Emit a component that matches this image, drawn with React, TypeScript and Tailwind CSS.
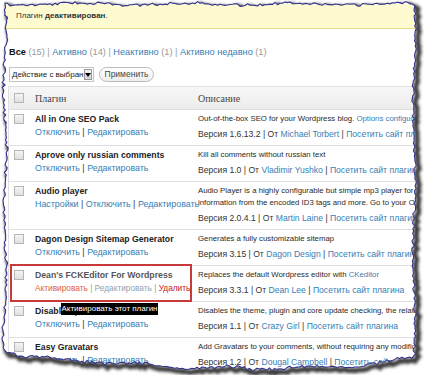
import React from "react";

type Plugin = {
  name: string;
  links: string[];
  desc: string[];
  descLink?: string;
  version: string;
  author: string;
  inactive?: boolean;
};

const plugins: Plugin[] = [
  {
    name: "All in One SEO Pack",
    links: ["Отключить", "Редактировать"],
    desc: ["Out-of-the-box SEO for your Wordpress blog. "],
    descLink: "Options configuration panel",
    version: "1.6.13.2",
    author: "Michael Torbert",
  },
  {
    name: "Aprove only russian comments",
    links: ["Отключить", "Редактировать"],
    desc: ["Kill all comments without russian text"],
    version: "1.0",
    author: "Vladimir Yushko",
  },
  {
    name: "Audio player",
    links: ["Настройки", "Отключить", "Редактировать"],
    desc: [
      "Audio Player is a highly configurable but simple mp3 player for all your audio needs.",
      "information from the encoded ID3 tags and more. Go to your Options page",
    ],
    version: "2.0.4.1",
    author: "Martin Laine",
  },
  {
    name: "Dagon Design Sitemap Generator",
    links: ["Отключить", "Редактировать"],
    desc: ["Generates a fully customizable sitemap"],
    version: "3.15",
    author: "Dagon Design",
  },
  {
    name: "Dean's FCKEditor For Wordpress",
    links: ["Активировать", "Редактировать", "Удалить"],
    desc: ["Replaces the default Wordpress editor with "],
    descLink: "CKeditor",
    version: "3.3.1",
    author: "Dean Lee",
    inactive: true,
  },
  {
    name: "Disable Updates",
    links: ["Отключить", "Редактировать"],
    desc: ["Disables the theme, plugin and core update checking, the related cronjobs and notification system."],
    version: "1.1",
    author: "Crazy Girl",
  },
  {
    name: "Easy Gravatars",
    links: ["Отключить", "Редактировать"],
    desc: ["Add Gravatars to your comments, without requiring any modifications to your theme."],
    version: "1.2",
    author: "Dougal Campbell",
  },
];

function rng(seed: number) {
  let a = seed;
  return () => {
    a |= 0;
    a = (a + 0x6d2b79f5) | 0;
    let t = Math.imul(a ^ (a >>> 15), 1 | a);
    t = (t + Math.imul(t ^ (t >>> 7), 61 | t)) ^ t;
    return ((t ^ (t >>> 14)) >>> 0) / 4294967296;
  };
}

function bottomBase(x: number) {
  const pts = [
    [5, 352],
    [60, 360],
    [120, 363],
    [200, 368],
    [300, 368],
    [380, 364],
    [414, 356],
  ];
  for (let i = 0; i < pts.length - 1; i++) {
    const [x0, y0] = pts[i];
    const [x1, y1] = pts[i + 1];
    if (x >= x0 && x <= x1) return y0 + ((x - x0) / (x1 - x0)) * (y1 - y0);
  }
  return 356;
}

function paperPath() {
  const r = rng(7);
  const p: string[] = [];
  for (let x = 5; x <= 414; x += 2.5) {
    const y = 4 + 1.2 * Math.sin(x / 17) + (r() - 0.5) * 2.8;
    p.push(`${x.toFixed(1)} ${y.toFixed(1)}`);
  }
  for (let y = 6; y <= 355; y += 2.5) {
    const x = 414 + 1.1 * Math.sin(y / 23) + (r() - 0.5) * 2.6;
    p.push(`${x.toFixed(1)} ${y.toFixed(1)}`);
  }
  for (let x = 412; x >= 5; x -= 2.5) {
    const y = bottomBase(x) + 1.3 * Math.sin(x / 13) + (r() - 0.5) * 3.2;
    p.push(`${x.toFixed(1)} ${y.toFixed(1)}`);
  }
  for (let y = 350; y >= 6; y -= 2.5) {
    const x = 5 + 1.5 * Math.sin(y / 19) + (r() - 0.5) * 3.2;
    p.push(`${x.toFixed(1)} ${y.toFixed(1)}`);
  }
  return "M" + p.join(" L") + " Z";
}

function TornEdge() {
  const d = paperPath();
  const outer = "M0 0 H424 V375 H0 Z " + d;
  return (
    <svg className="absolute inset-0 pointer-events-none" width="424" height="375" viewBox="0 0 424 375">
      <defs>
        <clipPath id="outside">
          <path d={outer} clipRule="evenodd" />
        </clipPath>
        <filter id="blur" x="-10%" y="-10%" width="120%" height="120%">
          <feGaussianBlur stdDeviation="1.5" />
        </filter>
      </defs>
      <path d={outer} fill="#ffffff" fillRule="evenodd" />
      <g clipPath="url(#outside)">
        <path d={d} transform="translate(3 3)" fill="none" stroke="#3a3a3a" strokeWidth="5" filter="url(#blur)" />
      </g>
      <path d={d} fill="none" stroke="#33338a" strokeWidth="1.1" strokeLinejoin="round" />
    </svg>
  );
}

function Checkbox() {
  return <div className="w-[10px] h-[10px] border border-[#b5b5b5] bg-gradient-to-b from-[#f4f4f4] to-[#e0e0e0]" />;
}

function Row({ p }: { p: Plugin }) {
  return (
    <div className="relative flex border-b border-[#dfdfdf]">
      <div className="w-[20px] pl-[5px] pt-[4px] shrink-0">
        <Checkbox />
      </div>
      <div className="w-[163px] shrink-0 pl-[6px] pt-[3px]">
        <div className={`font-bold text-[8.7px] leading-[12px] whitespace-nowrap ${p.inactive ? "text-[#555]" : "text-[#222]"}`}>
          {p.name}
        </div>
        <div className={`mt-[1px] leading-[12px] whitespace-nowrap ${p.inactive ? "text-[8.3px]" : "text-[8.9px]"}`}>
          {p.links.map((l, i) => {
            let color = "text-[#3580b5]";
            if (p.inactive) {
              if (i === 0) color = "text-[#e0603c]";
              else if (i === 1) color = "text-[#8fa3b3]";
              else color = "text-[#c41a1a]";
            }
            return (
              <span key={l}>
                {i > 0 && <span className={p.inactive ? "text-[#999]" : "text-[#333]"}> | </span>}
                <span className={color}>{l}</span>
              </span>
            );
          })}
        </div>
      </div>
      <div className="pl-[6px] pt-[3px] pb-[5px] whitespace-nowrap text-[#333]">
        {p.desc.map((line, i) => (
          <div key={i} className="text-[7.8px] leading-[12px] text-[#2a2a2a]">
            {line}
            {i === p.desc.length - 1 && p.descLink && <span className="text-[#3580b5]">{p.descLink}</span>}
          </div>
        ))}
        <div className="mt-[3px] text-[8.6px] leading-[12px]">
          Версия {p.version} | От <span className="text-[#3580b5]">{p.author}</span> |{" "}
          <span className="text-[#3580b5]">Посетить сайт плагина</span>
        </div>
      </div>
      {p.inactive && <div className="absolute left-[1px] top-[-2px] w-[182px] h-[38px] border-2 border-[#c8393a]" />}
    </div>
  );
}

export default function App() {
  return (
    <div className="relative w-[424px] h-[375px] overflow-hidden bg-white text-[8.5px] text-[#333] font-['Liberation_Sans',Arial,sans-serif]">
      <div className="mt-[4px] ml-[4px] h-[25px] bg-[#fffbd0] border-b border-[#e6dc8c] flex items-center pl-[12px] text-[8px] text-[#333]">
        Плагин&nbsp;<span className="font-bold">деактивирован</span>.
      </div>

      <div className="mt-[17px] ml-[9px] h-[12px] text-[9.2px] leading-[12px] whitespace-nowrap">
        <span className="font-bold text-[#111]">Все</span> <span className="text-[#999]">(15)</span>
        <span className="text-[#999]"> | </span>
        <span className="text-[#3580b5]">Активно</span> <span className="text-[#999]">(14)</span>
        <span className="text-[#999]"> | </span>
        <span className="text-[#3580b5]">Неактивно</span> <span className="text-[#999]">(1)</span>
        <span className="text-[#999]"> | </span>
        <span className="text-[#3580b5]">Активно недавно</span> <span className="text-[#999]">(1)</span>
      </div>

      <div className="mt-[9px] ml-[9px] flex items-center gap-[5px] h-[15px]">
        <div className="w-[85px] h-[15px] border border-[#c4c4c4] bg-white flex items-center justify-between pl-[2px] pr-[1px]">
          <span className="text-[8px] text-[#222] whitespace-nowrap">Действие с выбран</span>
          <div className="w-[9px] h-[11px] bg-gradient-to-b from-[#f4f4f4] to-[#d4d4d4] border border-[#999] flex items-center justify-center">
            <div className="w-0 h-0 border-l-[3px] border-r-[3px] border-t-[4px] border-l-transparent border-r-transparent border-t-black" />
          </div>
        </div>
        <div className="w-[55px] h-[15px] rounded-full border border-[#bbb] bg-gradient-to-b from-white to-[#eee] flex items-center justify-center text-[#464646]">
          Применить
        </div>
      </div>

      <div className="mt-[4px] ml-[8px] border-l border-[#dfdfdf]">
        <div className="flex items-center h-[24px] bg-gradient-to-b from-[#f7f7f7] to-[#ececec] border-t border-b border-[#dfdfdf] font-['Liberation_Serif',Georgia,serif] text-[10px] text-[#444]">
          <div className="w-[20px] pl-[5px] shrink-0">
            <Checkbox />
          </div>
          <div className="w-[163px] shrink-0 pl-[6px]">Плагин</div>
          <div className="pl-[6px]">Описание</div>
        </div>
        {plugins.map((p) => (
          <Row key={p.name} p={p} />
        ))}
      </div>

      <div className="absolute left-[61px] top-[303px] w-[97px] h-[12px] bg-black text-white text-[8px] leading-[12px] text-center whitespace-nowrap">
        Активировать этот плагин
      </div>

      <TornEdge />
    </div>
  );
}
